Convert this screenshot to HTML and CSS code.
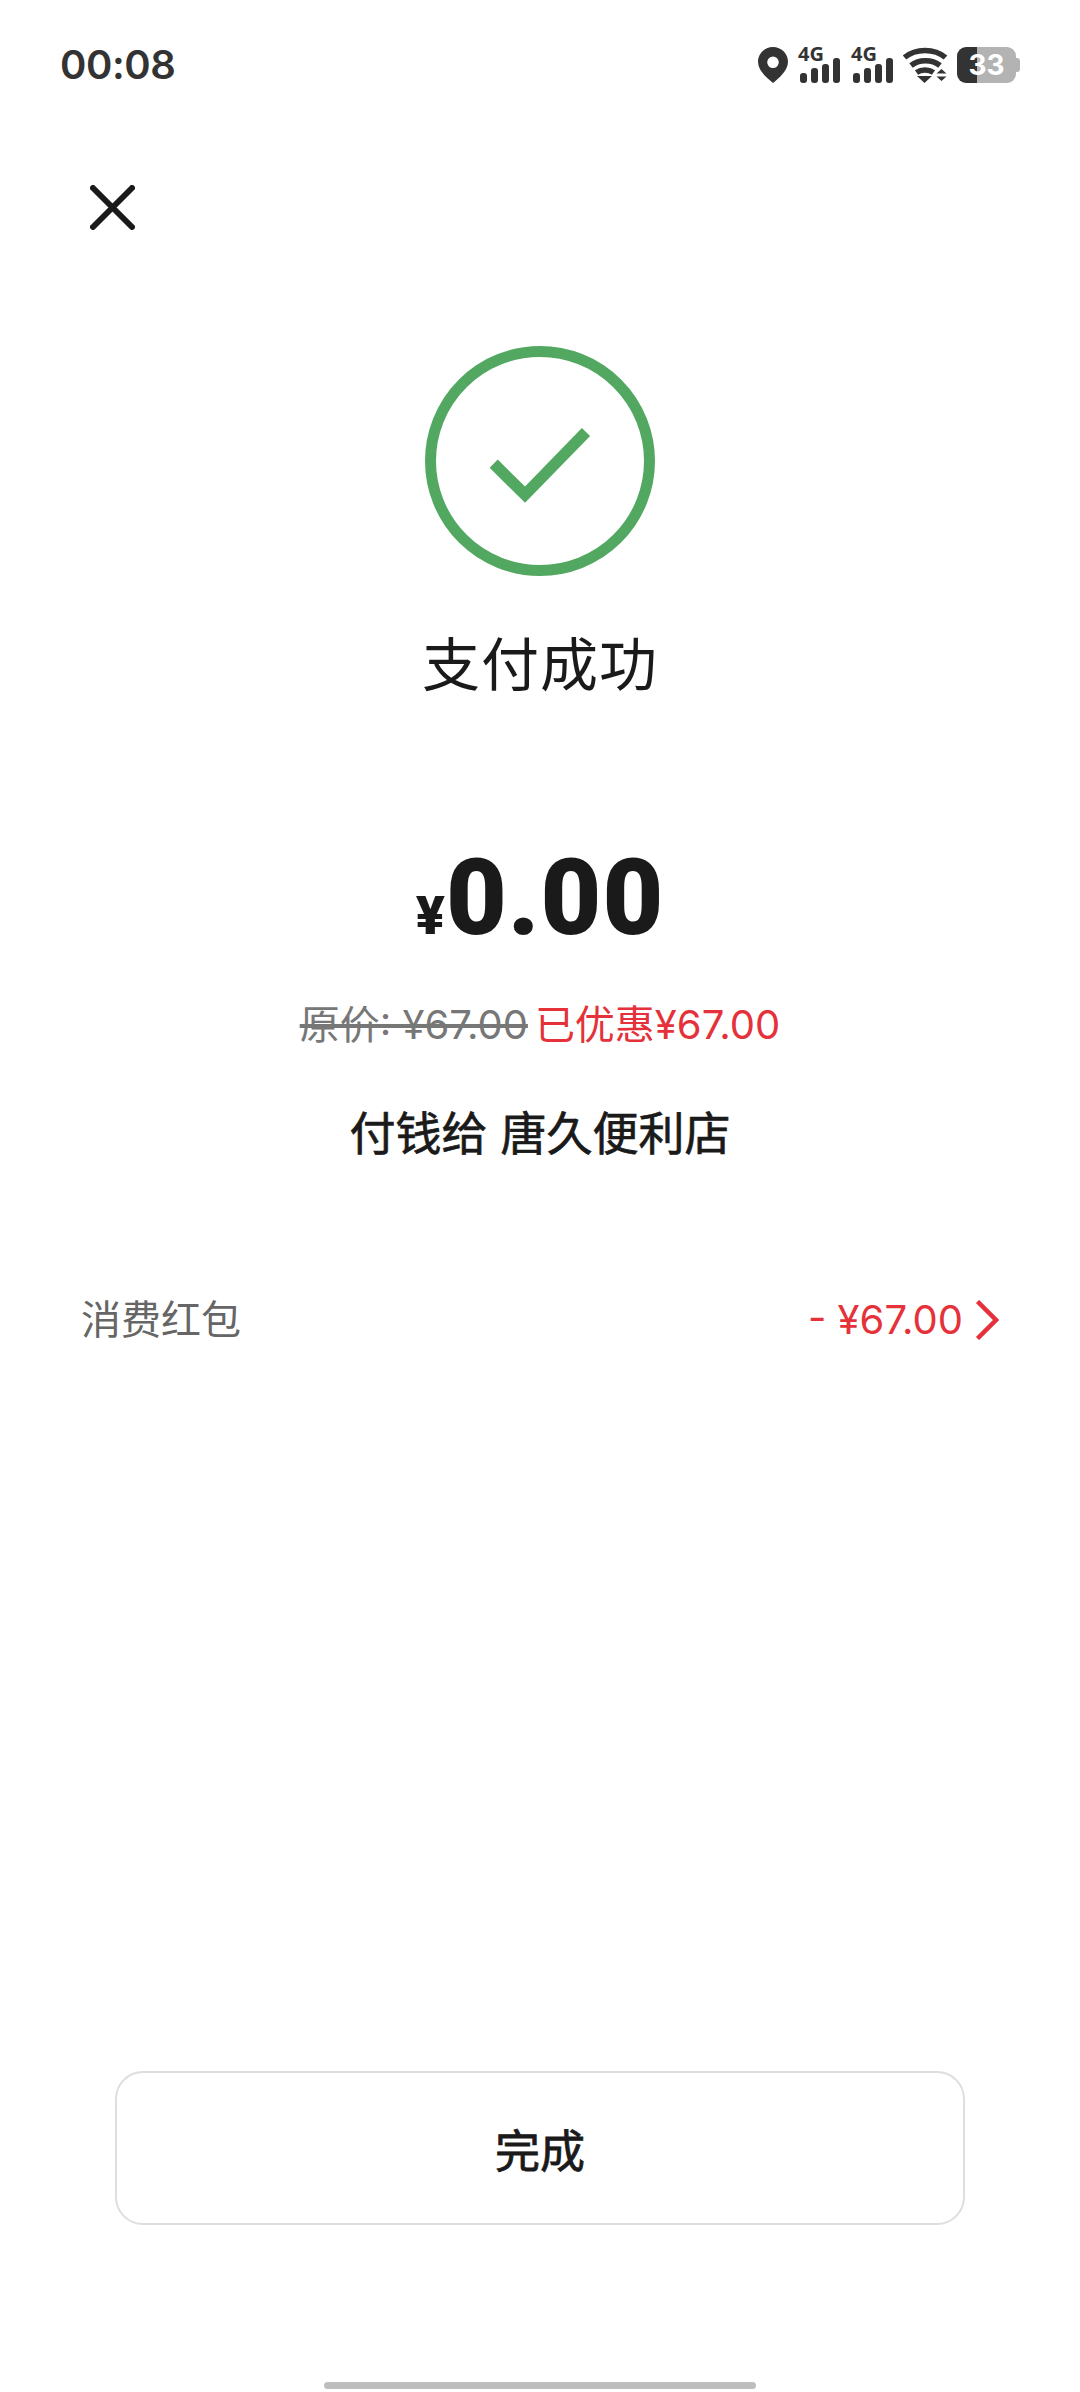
FILE: index.html
```html
<!DOCTYPE html>
<html lang="zh-CN">
<head>
    <meta charset="UTF-8">
    <meta name="viewport" content="width=device-width, initial-scale=1.0">
    <title>支付成功</title>
    <link rel="stylesheet" href="styles.css">
</head>
<body>
    <div class="page">
        <div class="status-bar">
            <span class="time">00:08</span>
            <div class="status-icons">
                <svg class="pin" width="30" height="36" viewBox="0 0 30 36">
                    <path fill="#333" fill-rule="evenodd" d="M15 0C6.7 0 0 6.6 0 14.8 0 24 9.5 31.5 15 36c5.500-4.500 15-12 15-21.200C30 6.600 23.300 0 15 0zm0 9.500a5.800 5.800 0 1 1 0 11.600 5.800 5.800 0 0 1 0-11.600z"/>
                </svg>
                <div class="signal">
                    <span class="signal-label">4G</span>
                    <svg width="41" height="25" viewBox="0 0 41 25">
                        <rect x="0" y="15" width="7" height="10" rx="3" fill="#333"/>
                        <rect x="11" y="10" width="7" height="15" rx="3" fill="#333"/>
                        <rect x="22" y="6" width="7" height="19" rx="3" fill="#333"/>
                        <rect x="33" y="0" width="7" height="25" rx="3" fill="#333"/>
                    </svg>
                </div>
                <div class="signal">
                    <span class="signal-label">4G</span>
                    <svg width="41" height="25" viewBox="0 0 41 25">
                        <rect x="0" y="15" width="7" height="10" rx="3" fill="#333"/>
                        <rect x="11" y="10" width="7" height="15" rx="3" fill="#333"/>
                        <rect x="22" y="6" width="7" height="19" rx="3" fill="#333"/>
                        <rect x="33" y="0" width="7" height="25" rx="3" fill="#333"/>
                    </svg>
                </div>
                <svg class="wifi" width="45" height="36" viewBox="0 0 45 36">
                    <path fill="none" stroke="#333" stroke-width="5.500" d="M1.500 10.500C12.500 1 31.500 1 42.500 10.500M8 18.500c8-6.500 21-6.500 29 0M13.500 25.500c5-3.500 12-3.500 17 0"/>
                    <path fill="#333" d="M14 29h15l-7.500 7zM33.500 26.500l5-4.500 5 4.500zM33.500 29.500h10l-5 4.500z"/>
                </svg>
                <div class="battery"><span>33</span></div>
            </div>
        </div>

        <svg class="close" width="45" height="45" viewBox="0 0 45 45">
            <path fill="none" stroke="#1a1a1a" stroke-width="6" stroke-linecap="round" d="M3 3l39 39M42 3L3 42"/>
        </svg>

        <svg class="check" width="230" height="230" viewBox="0 0 230 230">
            <circle cx="115" cy="115" r="109.500" fill="none" stroke="#52a860" stroke-width="11"/>
            <path fill="none" stroke="#52a860" stroke-width="11.500" d="M68.700 117.700L100 148.700 161 86"/>
        </svg>

        <h1 class="title">支付成功</h1>

        <div class="amount"><span class="amount-sign">¥</span>0.00</div>

        <div class="price-line">
            <span class="price-old">原价: ¥67.00</span>
            <span class="price-off">已优惠¥67.00</span>
        </div>

        <div class="payee">付钱给 唐久便利店</div>

        <div class="detail-row">
            <span class="detail-name">消费红包</span>
            <span class="detail-value">
                - ¥67.00
                <svg width="24" height="40" viewBox="0 0 24 40">
                    <path fill="none" stroke="#e5323a" stroke-width="4.500" d="M2.500 1.500L21 20 2.500 38.500"/>
                </svg>
            </span>
        </div>

        <button class="done-btn" type="button">完成</button>

        <div class="home-bar"></div>
    </div>
</body>
</html>
```

FILE: styles.css
```css
* {
    box-sizing: border-box;
}

body {
    margin: 0;
    background-color: #ffffff;
    font-family: Inter, "Noto Sans CJK SC", sans-serif;
    color: #1a1a1a;
}

.page {
    display: flex;
    flex-direction: column;
    align-items: center;
    height: 2392px;
    overflow: hidden;
    background-color: #ffffff;
}

/* status bar */
.status-bar {
    display: flex;
    justify-content: space-between;
    align-items: center;
    width: 100%;
    height: 36px;
    margin-top: 47px;
    padding: 0 60px;
}

.time {
    margin-top: -2px;
    font-size: 40px;
    font-weight: 600;
    letter-spacing: -0.4px;
    color: #333333;
}

.status-icons {
    display: flex;
    align-items: flex-end;
    height: 36px;
}

.signal {
    display: flex;
    flex-direction: column;
    margin-left: 10px;
    height: 36px;
    width: 43px;
    justify-content: space-between;
}

.signal-label {
    font-family: "Open Sans", sans-serif;
    font-size: 20px;
    line-height: 13px;
    font-weight: 700;
    color: #333333;
}

.signal svg {
    margin-left: 2px;
    margin-top: -2px;
}

.wifi {
    margin-left: 9px;
}

.battery {
    position: relative;
    display: flex;
    justify-content: center;
    align-items: center;
    width: 59px;
    height: 36px;
    margin-left: 9px;
    margin-right: 4px;
    border-radius: 9px;
    background: linear-gradient(to right, #333333 20px, #b3b3b3 20px);
    color: #ffffff;
    font-size: 28px;
    font-weight: 700;
}

.battery::after {
    content: "";
    position: absolute;
    top: 11px;
    right: -4px;
    width: 4px;
    height: 14px;
    border-radius: 0 3px 3px 0;
    background-color: #b3b3b3;
}

/* result */
.close {
    align-self: flex-start;
    margin: 102px 0 0 90px;
}

.check {
    margin-top: 116px;
}

.title {
    margin: 49px 0 0;
    font-size: 58px;
    line-height: 80px;
    font-weight: 400;
    letter-spacing: 1px;
    color: #1a1a1a;
}

.amount {
    display: flex;
    align-items: baseline;
    margin-top: 134px;
    height: 120px;
    font-family: Roboto, sans-serif;
    font-size: 105px;
    line-height: 120px;
    font-weight: 900;
    letter-spacing: 1px;
    color: #1a1a1a;
}

.amount-sign {
    margin-right: 1px;
    font-size: 54px;
    letter-spacing: 0;
}

.price-line {
    display: flex;
    gap: 7px;
    margin-top: 38px;
    font-size: 40px;
    line-height: 56px;
}

.price-old {
    color: #777777;
    text-decoration: line-through;
}

.price-off {
    color: #e5323a;
}

.payee {
    margin-top: 48px;
    font-size: 46px;
    line-height: 64px;
    -webkit-text-stroke: 0.7px #1a1a1a;
    color: #1a1a1a;
}

.detail-row {
    display: flex;
    justify-content: space-between;
    align-items: center;
    width: 100%;
    margin-top: 127px;
    padding: 0 81px;
    font-size: 40px;
    line-height: 56px;
}

.detail-name {
    color: #666666;
}

.detail-value {
    display: flex;
    align-items: center;
    gap: 12px;
    color: #e5323a;
}

.done-btn {
    width: 850px;
    height: 154px;
    margin-top: auto;
    border: 2px solid #dedede;
    border-radius: 28px;
    background-color: #ffffff;
    font-family: inherit;
    font-size: 45px;
    -webkit-text-stroke: 0.8px #1a1a1a;
    color: #1a1a1a;
}

.home-bar {
    width: 432px;
    height: 7px;
    margin-top: 157px;
    margin-bottom: 3px;
    border-radius: 4px;
    background-color: #bdbdbd;
}
```
